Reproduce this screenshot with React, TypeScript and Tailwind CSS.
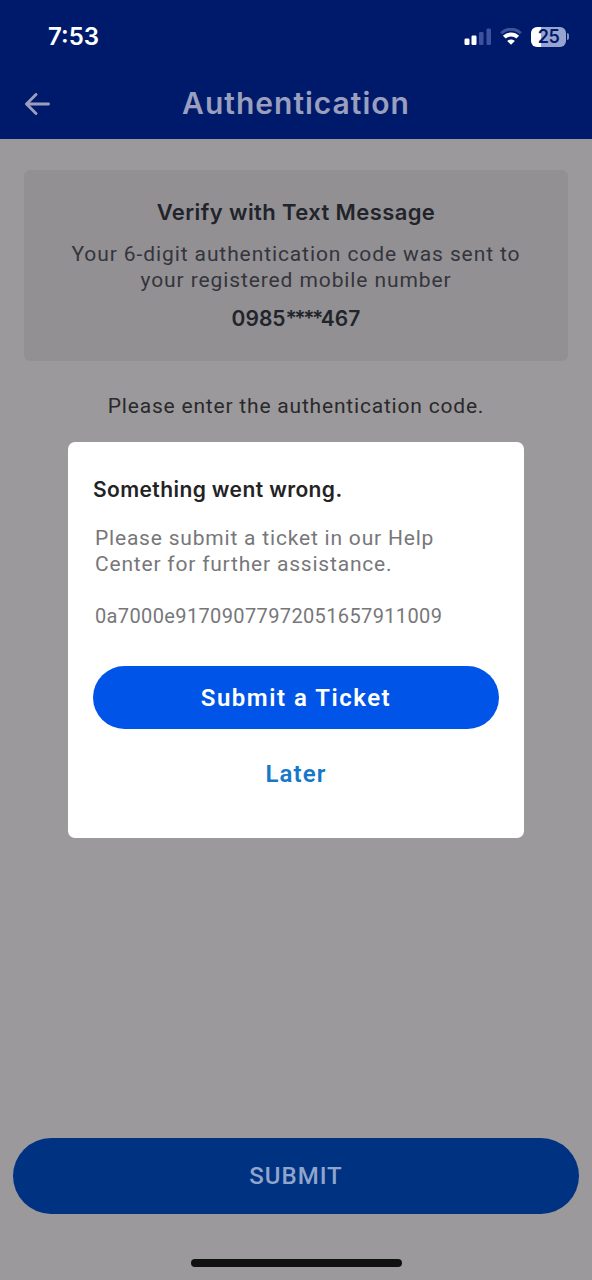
const StatusBar = () => (
  <div className="flex h-[73px] items-center justify-between pl-12 pr-[23px]">
    <span className="font-['Inter',sans-serif] text-[24px] font-semibold leading-none text-white">
      7:53
    </span>
    <div className="flex items-center gap-2">
      <svg width="28" height="17" viewBox="0 0 28 17" aria-label="Signal">
        <rect x="0.5" y="10.5" width="5" height="6.5" rx="1.2" fill="#fff" />
        <rect x="7.5" y="7.5" width="5" height="9.5" rx="1.2" fill="#fff" />
        <rect x="15" y="4" width="4.5" height="13" rx="1.2" fill="#3d529b" />
        <rect x="22.5" y="0.5" width="4.5" height="16.5" rx="1.2" fill="#3d529b" />
      </svg>
      <svg width="22" height="17" viewBox="0 0 22 17" fill="none" aria-label="Wi-Fi">
        <path d="M1.2 5.2C6.6 -0.2 15.4 -0.2 20.8 5.2" stroke="#3d529b" strokeWidth="3" />
        <path d="M4.3 9.2C8 5.5 14 5.5 17.7 9.2" stroke="#fff" strokeWidth="4" />
        <path d="M11 16.8L7.2 13C9.2 11 12.8 11 14.8 13Z" fill="#fff" />
      </svg>
      <div className="ml-px flex items-center gap-px">
        <div className="flex h-5 w-[35px] items-center justify-center rounded-[6px] bg-linear-to-r from-white from-28% to-[#98a4d0] to-28%">
          <span className="font-['Inter',sans-serif] text-[18px] font-semibold leading-none tracking-[-0.4px] text-[#001a6b]">
            25
          </span>
        </div>
        <div className="h-[7px] w-[2px] rounded-r-full bg-[#8491c2]" />
      </div>
    </div>
  </div>
);

const Header = () => (
  <header className="h-[139px] bg-[#001a6b]">
    <StatusBar />
    <div className="grid h-[61px] grid-cols-[56px_1fr_56px] items-center">
      <button type="button" aria-label="Back" className="pl-[25px]">
        <svg
          width="25"
          height="22"
          viewBox="0 0 25 22"
          fill="none"
          stroke="#999fbd"
          strokeWidth="2.9"
          strokeLinecap="round"
          strokeLinejoin="round"
        >
          <path d="M11 1.5L1.5 11L11 20.5M2 11H23.5" />
        </svg>
      </button>
      <h1 className="pb-[2px] text-center font-['Inter',sans-serif] text-[30px] font-semibold leading-none tracking-[1px] text-[#999fbd]">
        Authentication
      </h1>
    </div>
  </header>
);

const CodeNotice = () => (
  <section className="mx-6 mt-[31px] h-[191px] rounded-md bg-[#929093] pt-[27px] text-center text-[#22242b]">
    <h2 className="font-['Inter',sans-serif] text-[22px] font-semibold leading-[30px] tracking-[0.4px]">
      Verify with Text Message
    </h2>
    <p className="mt-[14px] text-[21px] leading-[26px] tracking-[0.9px] text-[#34353c]">
      Your 6-digit authentication code was sent to
      <br />
      your registered mobile number
    </p>
    <p className="mt-[13px] font-['Inter',sans-serif] text-[21px] font-semibold leading-[26px]">
      0985<span className="tracking-[-2.5px]">****</span>467
    </p>
  </section>
);

const ErrorDialog = () => (
  <div
    role="dialog"
    className="absolute inset-x-[68px] top-[442px] h-[396px] rounded-[7px] bg-white px-[25px] pt-[33px]"
  >
    <h2 className="font-['Inter',sans-serif] text-[21px] font-semibold leading-[30px] tracking-[0.4px] text-[#232325]">
      Something went wrong.
    </h2>
    <div className="ml-[2px] mt-5 text-[#77777a]">
      <p className="text-[21px] leading-[26px] tracking-[0.8px]">
        Please submit a ticket in our Help
        <br />
        Center for further assistance.
      </p>
      <p className="mt-[26px] text-[20px] leading-[26px] tracking-[0.37px]">
        0a7000e91709077972051657911009
      </p>
    </div>
    <button
      type="button"
      className="mt-[37px] flex h-[63px] w-full items-center justify-center rounded-full bg-[#0055e8] text-[24px] font-semibold tracking-[1.5px] text-white"
    >
      Submit a Ticket
    </button>
    <button
      type="button"
      className="mx-auto mt-[27px] block text-[24px] font-semibold leading-9 tracking-[1.1px] text-[#1678c8]"
    >
      Later
    </button>
  </div>
);

export default function App() {
  return (
    <div className="relative flex h-[1280px] w-[592px] flex-col overflow-hidden bg-[#9b999b] font-['Roboto',sans-serif]">
      <Header />
      <CodeNotice />
      <p className="mt-[31px] text-center text-[21px] leading-[28px] tracking-[0.8px] text-[#29292b]">
        Please enter the authentication code.
      </p>
      <div className="mt-auto px-[13px]">
        <button
          type="button"
          className="flex h-[76px] w-full items-center justify-center rounded-full bg-[#003282] text-[24px] font-medium tracking-[1px] text-[#8fa5cb]"
        >
          SUBMIT
        </button>
      </div>
      <div className="mx-auto mb-[13px] mt-[45px] h-2 w-[211px] rounded-full bg-[#111112]" />
      <ErrorDialog />
    </div>
  );
}
